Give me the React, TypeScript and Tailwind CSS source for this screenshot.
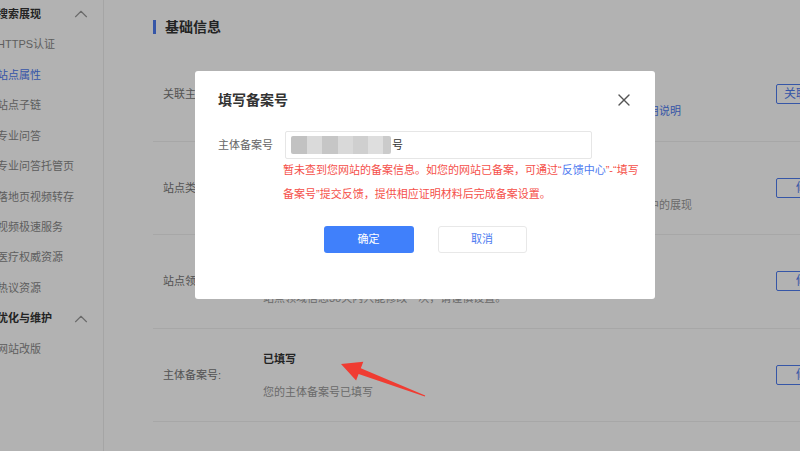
import { ChevronUp, X } from "lucide-react"

const font = "font-['Liberation_Sans','Noto_Sans_CJK_SC',sans-serif]"

const menu: { label: string; heading?: boolean; active?: boolean }[] = [
  { label: "搜索展现", heading: true },
  { label: "HTTPS认证" },
  { label: "站点属性", active: true },
  { label: "站点子链" },
  { label: "专业问答" },
  { label: "专业问答托管页" },
  { label: "落地页视频转存" },
  { label: "视频极速服务" },
  { label: "医疗权威资源" },
  { label: "热议资源" },
  { label: "优化与维护", heading: true },
  { label: "网站改版" },
]

function Sidebar() {
  return (
    <div className="w-[104px] shrink-0 border-r border-[#ececec] bg-white overflow-hidden">
      <div className="mt-[-1px]">
        {menu.map((item) => (
          <div key={item.label} className="h-[30.45px] flex items-center justify-between pr-[11px]">
            <span
              className={`ml-[-3px] whitespace-nowrap text-[11px] ${
                item.heading ? "font-bold text-[#333]" : item.active ? "text-[#4e7bf0]" : "text-[#888]"
              }`}
            >
              {item.label}
            </span>
            {item.heading && <ChevronUp className="h-[22px] w-[22px] text-[#999]" strokeWidth={1.25} />}
          </div>
        ))}
      </div>
    </div>
  )
}

function Row({
  label,
  title,
  desc,
  action,
}: {
  label: string
  title: React.ReactNode
  desc: React.ReactNode
  action: string
}) {
  return (
    <div className="h-[93.5px] flex items-center border-b border-[#efefef]">
      <div className="w-[110px] shrink-0 pl-[10px] text-[11px] text-[#777] whitespace-nowrap">{label}</div>
      <div className="flex-1 flex flex-col gap-[13px] pt-[1px]">
        <div className="text-[11px] leading-[20px] font-bold text-[#333] whitespace-nowrap">{title}</div>
        <div className="text-[11px] leading-[20px] text-[#999] whitespace-nowrap">{desc}</div>
      </div>
      <button className="w-[64px] h-[20px] mr-[13px] shrink-0 border border-[#4e7bf0] rounded-[2px] text-[12px] text-[#4e7bf0] leading-none whitespace-nowrap">
        {action}
      </button>
    </div>
  )
}

function Content() {
  return (
    <div className="flex-1 overflow-hidden pl-[49px] bg-white">
      <div className="w-[700px]">
        <div className="h-[48px] flex items-center pt-[6px]">
          <span className="w-[3px] h-[14px] bg-[#4e7bf0] mr-[9px]" />
          <span className="text-[14px] font-bold text-[#333]">基础信息</span>
        </div>
        <Row
          label="关联主体"
          title="未关联"
          desc={
            <>
              将站点关联到对应的主体资质，可获得主体相关的搜索展现权益，详情请查看
              <span className="text-[#4e7bf0]">使用说明</span>
            </>
          }
          action="关联主体"
        />
        <Row
          label="站点类型"
          title="信息服务"
          desc="请根据站点的实际情况选择合适站点类型，站点类型信息将影响站点在搜索结果中的展现"
          action="修改"
        />
        <Row label="站点领域" title="综合门户" desc="站点领域信息30天内只能修改一次，请谨慎设置。" action="修改" />
        <Row label="主体备案号:" title="已填写" desc="您的主体备案号已填写" action="修改" />
      </div>
    </div>
  )
}

function Modal() {
  return (
    <div className="absolute left-[195px] top-[71px] w-[460px] h-[228px] bg-white rounded-[3px] px-[23px] pt-[17px]">
      <div className="flex items-center justify-between">
        <span className="text-[14px] leading-[24px] font-bold text-[#333]">填写备案号</span>
        <X className="w-[20px] h-[20px] text-[#555] mr-[-2px]" strokeWidth={1.6} />
      </div>
      <div className="flex items-center mt-[19px]">
        <span className="w-[67px] shrink-0 text-[11px] text-[#666] whitespace-nowrap">主体备案号</span>
        <div className="w-[307px] h-[28px] border border-[#e6e6e6] rounded-[2px] flex items-center pl-[5px]">
          <div className="flex h-[18px] rounded-[2px] overflow-hidden">
            <span className="w-[16px] bg-[#c2c2c2]" />
            <span className="w-[15px] bg-[#dadada]" />
            <span className="w-[16px] bg-[#c6c6c6]" />
            <span className="w-[15px] bg-[#d9d9d9]" />
            <span className="w-[15px] bg-[#cfcfcf]" />
            <span className="w-[15px] bg-[#dedede]" />
            <span className="w-[8px] bg-[#cbcbcb]" />
          </div>
          <span className="text-[11px] text-[#333] ml-[1px]">号</span>
        </div>
      </div>
      <div className="ml-[65px] mt-[-1px] text-[11px] leading-[24px] text-[#f5504a] whitespace-nowrap">
        暂未查到您网站的备案信息。如您的网站已备案，可通过“<span className="text-[#4e7bf0]">反馈中心</span>”-“填写
        <br />
        备案号”提交反馈，提供相应证明材料后完成备案设置。
      </div>
      <div className="flex justify-center gap-[24px] mt-[20px]">
        <button className="w-[90px] h-[27px] rounded-[3px] bg-[#4080fb] text-white text-[11px]">确定</button>
        <button className="w-[89px] h-[27px] rounded-[3px] border border-[#e8e8e8] bg-white text-[#4e7bf0] text-[11px]">
          取消
        </button>
      </div>
    </div>
  )
}

export default function App() {
  return (
    <div className={`relative w-[800px] h-[451px] overflow-hidden bg-white ${font}`}>
      <div className="flex h-full">
        <Sidebar />
        <Content />
      </div>
      <div className="absolute inset-0 bg-black/30" />
      <Modal />
      <svg className="absolute left-0 top-0" width="800" height="451" viewBox="0 0 800 451">
        <polygon
          points="341,364 363.3,361.8 360.8,368.3 425.2,395.5 424.8,396.5 358.6,373.9 356.1,380.4"
          fill="#f03c32"
        />
      </svg>
    </div>
  )
}
